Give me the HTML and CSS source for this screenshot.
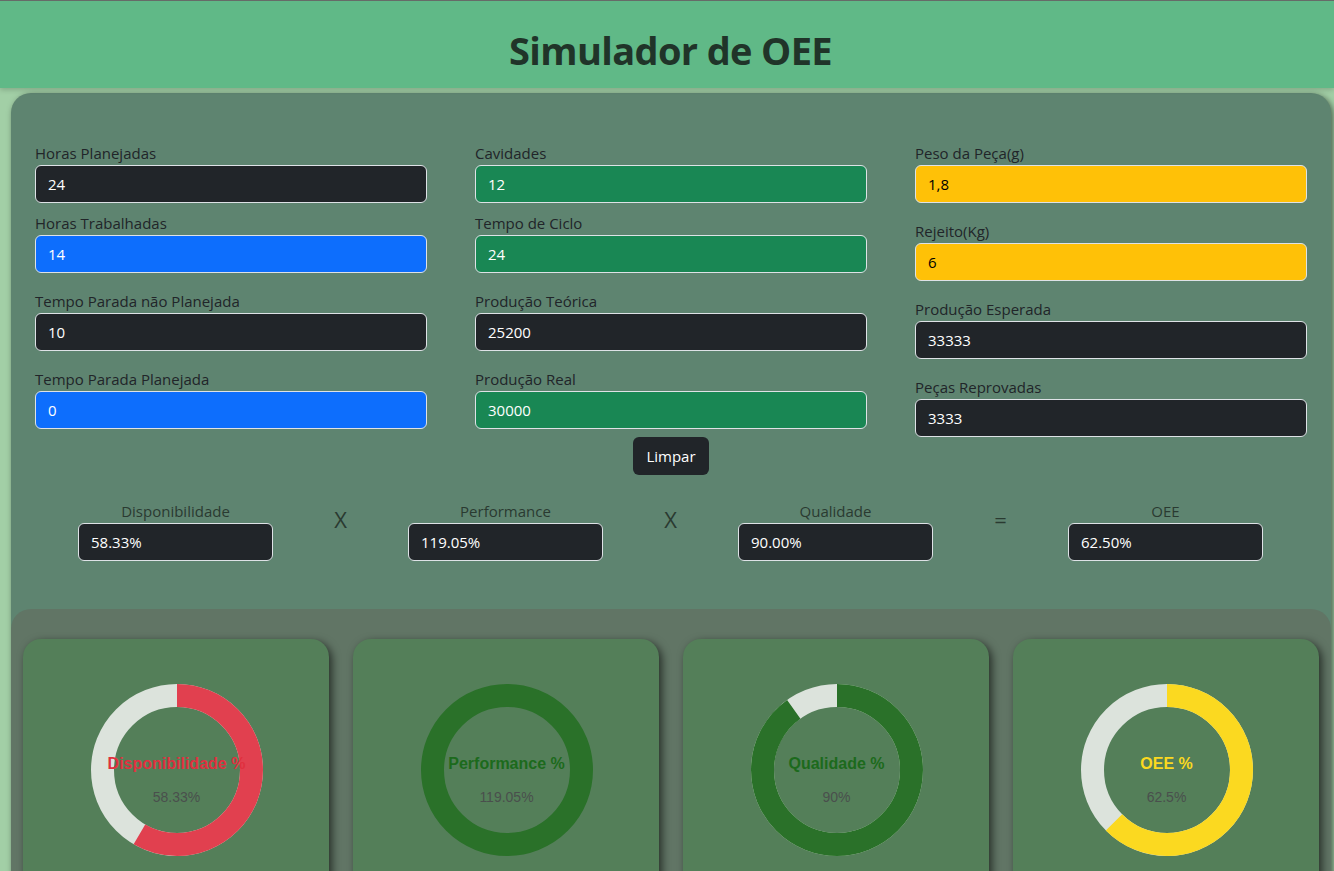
FILE: index.html
```html
<!DOCTYPE html>
<html lang="pt-BR">
<head>
<meta charset="utf-8">
<title>Simulador de OEE</title>
<link rel="stylesheet" href="styles.css">
</head>
<body>
<header class="top">
  <h1 class="title">Simulador de OEE</h1>
</header>
<main class="panel">
  <div class="fields">
    <div class="col">
      <div class="field"><label>Horas Planejadas</label><div class="input dark">24</div></div>
      <div class="field tight"><label>Horas Trabalhadas</label><div class="input blue">14</div></div>
      <div class="field"><label>Tempo Parada não Planejada</label><div class="input dark">10</div></div>
      <div class="field"><label>Tempo Parada Planejada</label><div class="input blue">0</div></div>
    </div>
    <div class="col">
      <div class="field"><label>Cavidades</label><div class="input green">12</div></div>
      <div class="field tight"><label>Tempo de Ciclo</label><div class="input green">24</div></div>
      <div class="field"><label>Produção Teórica</label><div class="input dark">25200</div></div>
      <div class="field"><label>Produção Real</label><div class="input green">30000</div></div>
      <div class="actions"><button class="btn">Limpar</button></div>
    </div>
    <div class="col">
      <div class="field"><label>Peso da Peça(g)</label><div class="input yellow">1,8</div></div>
      <div class="field"><label>Rejeito(Kg)</label><div class="input yellow">6</div></div>
      <div class="field"><label>Produção Esperada</label><div class="input dark">33333</div></div>
      <div class="field"><label>Peças Reprovadas</label><div class="input dark">3333</div></div>
    </div>
  </div>

  <div class="results">
    <div class="result"><span class="rlabel">Disponibilidade</span><div class="input dark">58.33%</div></div>
    <div class="op">X</div>
    <div class="result"><span class="rlabel">Performance</span><div class="input dark">119.05%</div></div>
    <div class="op">X</div>
    <div class="result"><span class="rlabel">Qualidade</span><div class="input dark">90.00%</div></div>
    <div class="op">=</div>
    <div class="result"><span class="rlabel">OEE</span><div class="input dark">62.50%</div></div>
  </div>

  <section class="charts">
    <div class="card">
      <div class="donut">
        <svg width="172" height="172" viewBox="0 0 172 172">
          <circle cx="86" cy="86" r="74.5" class="track"/>
          <circle cx="86" cy="86" r="74.5" class="seg red" stroke-dasharray="273.05 468.1" transform="rotate(-90 86 86)"/>
        </svg>
        <div class="dtext"><span class="dtitle t-red">Disponibilidade %</span><span class="dval">58.33%</span></div>
      </div>
    </div>
    <div class="card">
      <div class="donut">
        <svg width="172" height="172" viewBox="0 0 172 172">
          <circle cx="86" cy="86" r="74.5" class="seg green"/>
        </svg>
        <div class="dtext"><span class="dtitle t-green">Performance %</span><span class="dval">119.05%</span></div>
      </div>
    </div>
    <div class="card">
      <div class="donut">
        <svg width="172" height="172" viewBox="0 0 172 172">
          <circle cx="86" cy="86" r="74.5" class="track"/>
          <circle cx="86" cy="86" r="74.5" class="seg green" stroke-dasharray="421.29 468.1" transform="rotate(-90 86 86)"/>
        </svg>
        <div class="dtext"><span class="dtitle t-green">Qualidade %</span><span class="dval">90%</span></div>
      </div>
    </div>
    <div class="card">
      <div class="donut">
        <svg width="172" height="172" viewBox="0 0 172 172">
          <circle cx="86" cy="86" r="74.5" class="track"/>
          <circle cx="86" cy="86" r="74.5" class="seg yellow" stroke-dasharray="292.56 468.1" transform="rotate(-90 86 86)"/>
        </svg>
        <div class="dtext"><span class="dtitle t-yellow">OEE %</span><span class="dval">62.5%</span></div>
      </div>
    </div>
  </section>
</main>
</body>
</html>
```

FILE: styles.css
```css
* { box-sizing: border-box; }

html, body {
  margin: 0;
  padding: 0;
}

body {
  background: #a2cfa6;
  font-family: "Open Sans", "Noto Sans", sans-serif;
  font-size: 15px;
  color: #212529;
}

.top {
  background: #60b987;
  border-top: 1px solid #666b68;
  height: 88px;
  display: flex;
  align-items: center;
  justify-content: center;
  padding-top: 10px;
  box-shadow: 0 2px 5px rgba(0, 0, 0, 0.18);
  position: relative;
  z-index: 1;
}

.title {
  margin: 0 0 0 7px;
  font-size: 38px;
  line-height: 46px;
  font-weight: 700;
  color: #203429;
  letter-spacing: -0.65px;
}

.panel {
  margin: 5px 0 0 11px;
  width: 1320px;
  background: #5e8470;
  border-radius: 20px;
  box-shadow: 2px 2px 6px rgba(0, 0, 0, 0.55);
}

.fields {
  display: grid;
  grid-template-columns: repeat(3, 392px);
  column-gap: 48px;
  padding: 48px 24px 0;
  align-items: start;
}

.col {
  display: flex;
  flex-direction: column;
}

.field {
  display: flex;
  flex-direction: column;
  margin-top: 16px;
}
.field:first-child { margin-top: 0; }
.field.tight { margin-top: 8px; }

.field label {
  line-height: 24px;
  height: 24px;
  color: #212529;
}

.input {
  height: 38px;
  border: 1px solid #dee2e6;
  border-radius: 6px;
  padding: 0 12px;
  font-size: 15px;
  display: flex;
  align-items: center;
}
.input.dark { background: #212529; color: #fff; }
.input.blue { background: #0d6efd; color: #fff; }
.input.green { background: #198754; color: #fff; }
.input.yellow { background: #ffc107; color: #000; }

.actions {
  display: flex;
  justify-content: center;
  margin-top: 8px;
}

.btn {
  height: 38px;
  padding: 0 13px;
  background: #212529;
  color: #fff;
  border: none;
  border-radius: 6px;
  font-family: inherit;
  font-size: 15px;
}

.results {
  display: grid;
  grid-template-columns: 195px 135px 195px 135px 195px 135px 195px;
  justify-content: center;
  margin-top: 24px;
  padding-right: 1px;
}

.result {
  display: flex;
  flex-direction: column;
}

.rlabel {
  text-align: center;
  line-height: 24px;
  height: 24px;
  color: #2a3a31;
}

.op {
  text-align: center;
  font-size: 22px;
  line-height: 30px;
  padding-top: 5px;
  color: #2a3a31;
}

.charts {
  margin-top: 48px;
  background: #617565;
  border-radius: 20px;
  padding: 30px 12px 30px;
  display: grid;
  grid-template-columns: repeat(4, 306px);
  column-gap: 24px;
}

.card {
  height: 280px;
  background: #547f59;
  border-radius: 18px;
  box-shadow: 3px 3px 9px rgba(0, 0, 0, 0.6);
  display: flex;
  justify-content: center;
  padding-top: 45px;
}

.donut {
  position: relative;
  width: 172px;
  height: 172px;
  margin-left: 1px;
}

.donut svg { display: block; }

.track, .seg {
  fill: none;
  stroke-width: 23;
}
.track { stroke: #dce3dc; }
.seg.red { stroke: #e1404f; }
.seg.green { stroke: #2a7129; }
.seg.yellow { stroke: #fbd920; }

.dtext {
  position: absolute;
  left: -40px;
  right: -40px;
  top: 71px;
  display: flex;
  flex-direction: column;
  align-items: center;
  font-family: "Liberation Sans", Arial, sans-serif;
}

.dtitle {
  font-size: 16px;
  font-weight: 700;
  line-height: 18px;
}
.t-red { color: #e0303f; }
.t-green { color: #1c6a1c; }
.t-yellow { color: #fbd920; }

.dval {
  margin-top: 16px;
  font-size: 14px;
  line-height: 16px;
  color: #4a4f4d;
}
```
